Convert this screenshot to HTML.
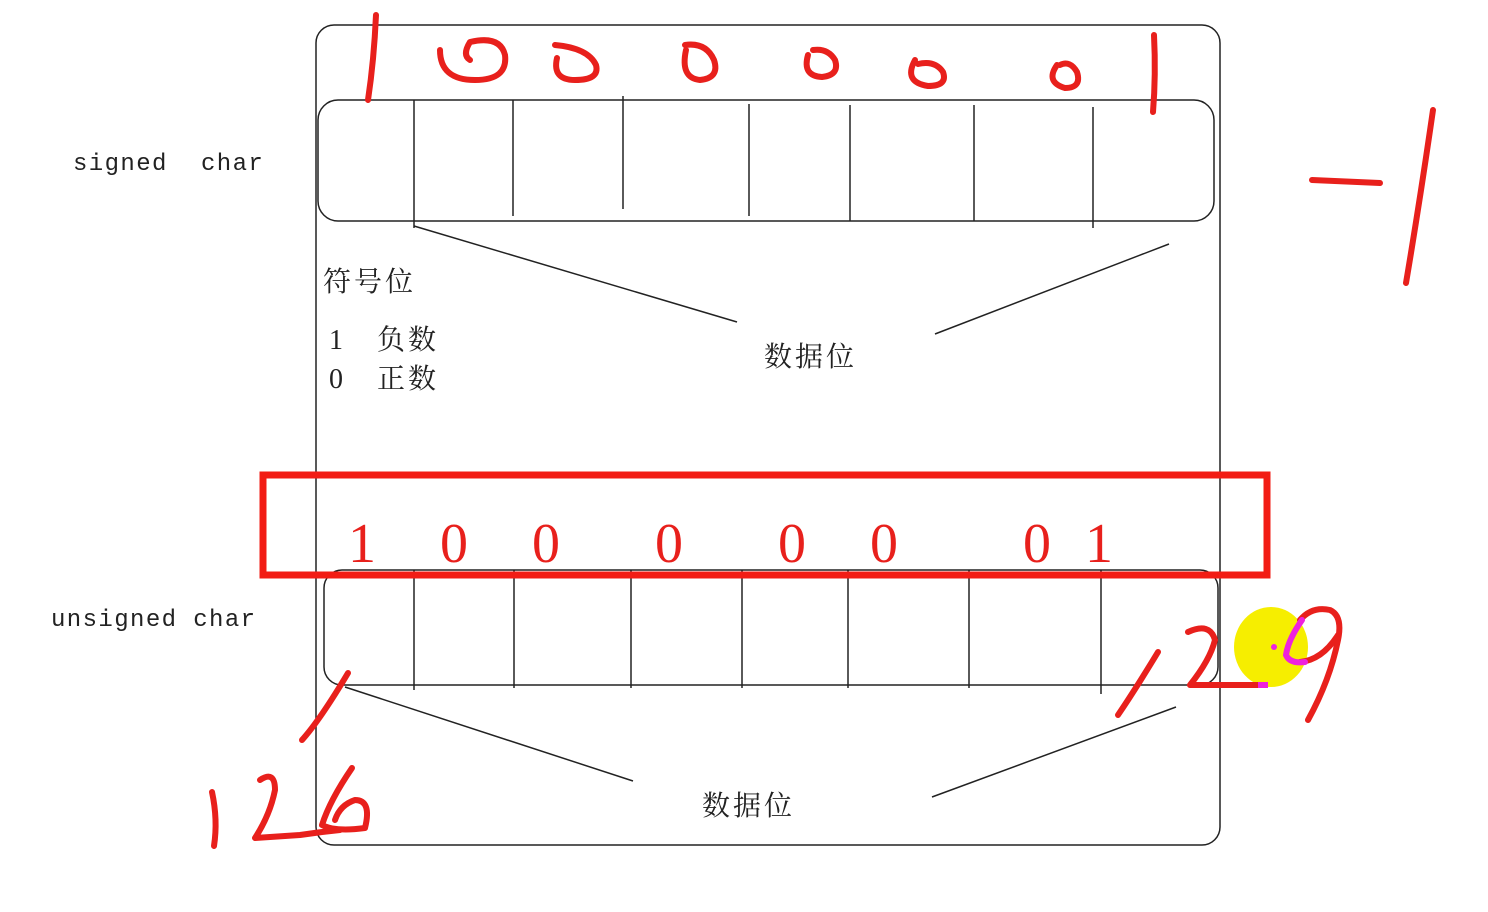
<!DOCTYPE html>
<html><head><meta charset="utf-8"><style>
html,body{margin:0;padding:0;background:#fff;width:1488px;height:912px;overflow:hidden}
svg{display:block}
.t{font-family:"Liberation Mono","Noto Sans CJK SC",monospace;font-size:24px;fill:#222;letter-spacing:1.4px}
.c{font-family:"Liberation Serif","Noto Serif CJK SC",serif;font-size:28px;fill:#222;letter-spacing:3px}
.r{font-family:"Liberation Serif",serif;font-size:56px;fill:#e8201c}
</style></head><body>
<svg width="1488" height="912" viewBox="0 0 1488 912">
<g fill="none" stroke="#222" stroke-width="1.5">
<rect x="316" y="25" width="904" height="820" rx="18"/>
<rect x="318" y="100" width="896" height="121" rx="20"/>
<line x1="414" y1="100" x2="414" y2="228"/>
<line x1="513" y1="100" x2="513" y2="216"/>
<line x1="623" y1="96" x2="623" y2="209"/>
<line x1="749" y1="104" x2="749" y2="216"/>
<line x1="850" y1="105" x2="850" y2="221"/>
<line x1="974" y1="105" x2="974" y2="221"/>
<line x1="1093" y1="107" x2="1093" y2="228"/>
<line x1="414" y1="226" x2="737" y2="322"/>
<line x1="1169" y1="244" x2="935" y2="334"/>
<rect x="324" y="570" width="894" height="115" rx="18"/>
<line x1="414" y1="570" x2="414" y2="690"/>
<line x1="514" y1="570" x2="514" y2="688"/>
<line x1="631" y1="570" x2="631" y2="688"/>
<line x1="742" y1="570" x2="742" y2="688"/>
<line x1="848" y1="570" x2="848" y2="688"/>
<line x1="969" y1="570" x2="969" y2="688"/>
<line x1="1101" y1="570" x2="1101" y2="694"/>
<line x1="345" y1="687" x2="633" y2="781"/>
<line x1="1176" y1="707" x2="932" y2="797"/>
</g>
<text class="t" x="73" y="170">signed</text><text class="t" x="201" y="170">char</text>
<text class="t" x="51" y="626">unsigned char</text>
<text class="c" x="323" y="291">符号位</text>
<text class="c" x="329" y="349">1</text><text class="c" x="377" y="349">负数</text>
<text class="c" x="329" y="388">0</text><text class="c" x="377" y="388">正数</text>
<text class="c" x="764" y="366">数据位</text>
<text class="c" x="702" y="815">数据位</text>
<rect x="263" y="475" width="1004" height="100" fill="none" stroke="#f21c14" stroke-width="7"/>
<g class="r"><text x="348" y="562">1</text><text x="440" y="562">0</text><text x="532" y="562">0</text><text x="655" y="562">0</text><text x="778" y="562">0</text><text x="870" y="562">0</text><text x="1023" y="562">0</text><text x="1085" y="562">1</text></g>
<ellipse cx="1271" cy="647" rx="37" ry="40" fill="#f6ee00"/>
<g fill="none" stroke="#e8201c" stroke-width="6" stroke-linecap="round" stroke-linejoin="round">
<path d="M376 15 Q374 60 368 100"/>
<path d="M440 50 Q440 80 475 80 Q508 80 505 55 Q500 35 470 42 Q462 55 470 60"/>
<path d="M557 58 Q552 80 575 80 Q600 80 596 65 Q588 48 555 45"/>
<path d="M686 50 Q680 78 700 80 Q720 78 714 60 Q706 42 685 45"/>
<path d="M808 55 Q802 76 822 77 Q840 75 835 60 Q828 48 813 50"/>
<path d="M915 60 Q903 82 928 86 Q948 86 943 72 Q935 60 918 64"/>
<path d="M1057 65 Q1045 82 1065 88 Q1082 88 1077 72 Q1070 60 1060 65"/>
<path d="M1154 35 Q1156 75 1153 112"/>
<path d="M1312 180 L1380 183"/>
<path d="M1433 110 Q1420 200 1406 283"/>
<path d="M348 673 Q320 720 302 740"/>
<path d="M212 792 Q218 820 214 846"/>
<path d="M260 780 Q275 770 275 790 Q270 815 255 838 L300 835 Q320 832 340 830"/>
<path d="M352 768 Q330 800 322 825 Q335 832 365 828 Q372 800 355 800 Q340 805 335 820"/>
<path d="M1158 652 Q1135 690 1118 715"/>
<path d="M1188 632 Q1210 622 1215 640 Q1210 660 1190 685 L1262 685"/>
<path d="M1300 620 Q1312 606 1330 610 Q1343 616 1338 640 Q1330 680 1308 720"/>
<path d="M1338 635 Q1322 660 1300 662"/>
</g>
<path d="M1302 620 Q1288 640 1286 655 Q1290 664 1305 662" fill="none" stroke="#ee22dd" stroke-width="6" stroke-linecap="round"/>
<path d="M1258 685 L1268 685" stroke="#ee22dd" stroke-width="6"/>
<circle cx="1274" cy="647" r="3" fill="#ee22dd"/>
</svg>
</body></html>
